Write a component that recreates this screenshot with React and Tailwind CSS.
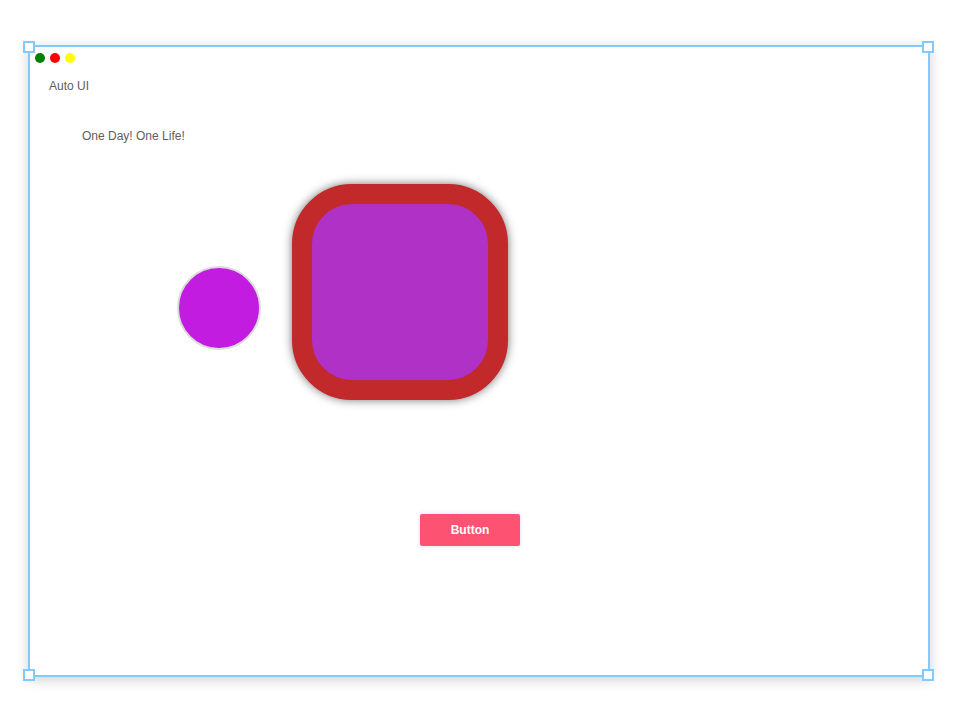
import React from "react";

const Handle = ({ className }) => (
  <div className={`absolute w-[12px] h-[12px] bg-white border-2 border-[#80cbfc] ${className}`} />
);

const App = () => {
  return (
    <div className="w-[961px] h-[726px] bg-white pt-[45px] pl-[28px] font-['Liberation_Sans',Arial,sans-serif]">
      <div className="relative w-[902px] h-[632px] border-2 border-[#80cbfc] bg-white shadow-[0_3px_12px_rgba(0,0,0,0.18)]">
        {/* header: window dots + labels */}
        <div className="flex flex-col pt-[6px] pl-[5px] text-[12px] leading-[14px] text-[#5e5e5e]">
          <div className="flex gap-[5px]">
            <span className="w-[10px] h-[10px] rounded-full bg-[#008000]" />
            <span className="w-[10px] h-[10px] rounded-full bg-[#ff0000]" />
            <span className="w-[10px] h-[10px] rounded-full bg-[#ffff00]" />
          </div>
          <p className="mt-[16px] ml-[14px]">Auto UI</p>
          <p className="mt-[36px] ml-[47px]">One Day! One Life!</p>
        </div>

        {/* canvas items */}
        <div className="absolute left-[147px] top-[219px] w-[84px] h-[84px] rounded-full bg-[#c11ce0] border-2 border-[#dcdcdc]" />
        <div className="absolute left-[262px] top-[137px] w-[216px] h-[216px] rounded-[60px] border-[20px] border-[#c2292a] bg-[#b031c6] shadow-[0_0_10px_rgba(0,0,0,0.55)]" />
        <button className="absolute left-[390px] top-[467px] w-[100px] h-[32px] rounded-[2px] bg-[#fe5272] text-white text-[12px] font-bold shadow-[0_0_4px_rgba(120,120,255,0.25)]">
          Button
        </button>

        {/* selection handles */}
        <Handle className="-left-[7px] -top-[6px]" />
        <Handle className="-right-[6px] -top-[6px]" />
        <Handle className="-left-[7px] -bottom-[6px]" />
        <Handle className="-right-[6px] -bottom-[6px]" />
      </div>
    </div>
  );
};

export default App;
